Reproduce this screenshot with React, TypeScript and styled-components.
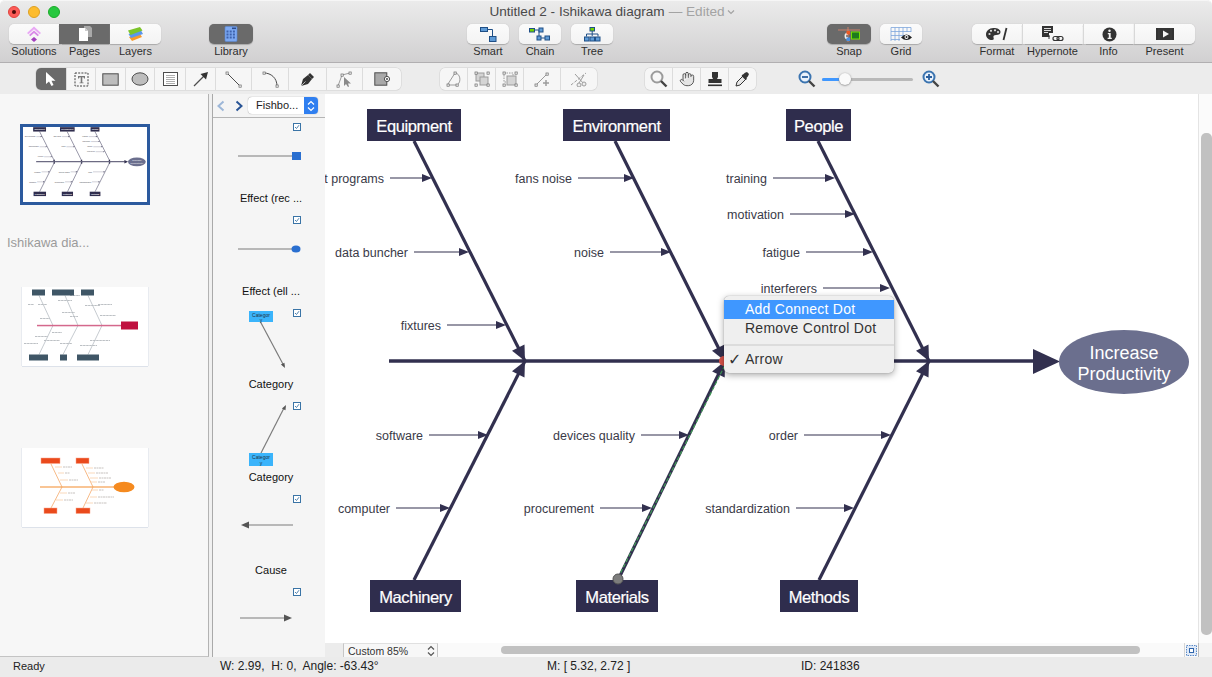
import React from "react";
import styled, { createGlobalStyle } from "styled-components";
import { Hand } from "lucide-react";

const Global = createGlobalStyle`
  html, body { margin: 0; padding: 0; background: #fff; overflow: hidden; }
  * { box-sizing: border-box; }
  #root { width: 1212px; height: 677px; }
`;

const Window = styled.div`
  width: 1212px; height: 677px; display: flex; flex-direction: column; overflow: hidden;
  font-family: "Liberation Sans", Arial, sans-serif; background: #ececec; border-radius: 5px 5px 0 0;
`;
const TopBar = styled.header`
  height: 63px; flex: none; background: linear-gradient(#ebebeb, #d1d0d1);
  border-bottom: 1px solid #b1afb1; border-top: 1px solid #f6f6f6; border-radius: 5px 5px 0 0;
`;
const TitleRow = styled.div`
  height: 21px; display: grid; grid-template-columns: 1fr auto 1fr; align-items: center;
`;
const Lights = styled.div`display: flex; gap: 8px; padding-left: 8px; align-items: center;`;
const Light = styled.span<{ $c: string; $b: string }>`
  width: 12px; height: 12px; border-radius: 50%; background: ${p => p.$c}; border: 1px solid ${p => p.$b};
  display: flex; align-items: center; justify-content: center;
`;
const Dot = styled.span`width: 4px; height: 4px; border-radius: 50%; background: #4d0a08;`;
const Title = styled.div`font-size: 13.6px; color: #4a4a4a; margin-left: 14px; white-space: nowrap; display: flex; align-items: center;`;
const Edited = styled.span`color: #a3a3a3; margin-left: 4px;`;
const ToolRow = styled.div`display: flex; padding: 2px 0 0 9px; align-items: flex-start;`;
const Group = styled.div<{ $ml?: number }>`display: flex; margin-left: ${p => p.$ml ?? 0}px;`;
const Item = styled.div<{ $w: number }>`width: ${p => p.$w}px; display: flex; flex-direction: column; align-items: center;`;
const Cell = styled.div<{ $on?: boolean; $first?: boolean; $last?: boolean; $sep?: boolean }>`
  width: 100%; height: 20px; display: flex; align-items: center; justify-content: center;
  background: ${p => p.$on ? "#6a6a6a" : "linear-gradient(#fbfbfb,#f3f3f3)"};
  border-radius: ${p => p.$first ? "5px" : "0"} ${p => p.$last ? "5px" : "0"} ${p => p.$last ? "5px" : "0"} ${p => p.$first ? "5px" : "0"};
  box-shadow: 0 0.5px 1px #a9a9a9;
  border-left: ${p => p.$sep ? "1px solid #d8d8d8" : "none"};
`;
const Label = styled.div`font-size: 11px; line-height: 13px; margin-top: 1px; color: #2e2e2e; white-space: nowrap;`;

const ShapeBar = styled.div`
  height: 31px; flex: none; display: flex; align-items: flex-start; padding: 5px 0 0 36px; background: #ececec;
`;
const ShapeGroup = styled.div<{ $ml?: number }>`
  display: flex; height: 22px; margin-left: ${p => p.$ml ?? 0}px; border-radius: 5px; background: #f6f6f6;
  box-shadow: 0 0 0 0.5px #cfcfcf; overflow: hidden;
`;
const ShapeCell = styled.div<{ $w: number; $on?: boolean }>`
  width: ${p => p.$w}px; display: flex; align-items: center; justify-content: center;
  background: ${p => p.$on ? "#6a6a6a" : "transparent"}; border-right: 1px solid #dcdcdc;
  &:last-child { border-right: none; }
`;
const ZoomBox = styled.div`display: flex; align-items: center; height: 22px; margin-left: 42px;`;
const Slider = styled.div`width: 91px; height: 3px; margin: 0 9px 0 6px; background: #b9b9b9; border-radius: 2px; position: relative;`;
const SliderFill = styled.div`width: 20px; height: 3px; background: #3f97ff; border-radius: 2px;`;
const Knob = styled.div`
  position: absolute; left: 17px; top: -5px; width: 12px; height: 12px; border-radius: 50%;
  background: #fafafa; box-shadow: 0 0.5px 2px #777;
`;

const Main = styled.div`flex: 1; display: flex; min-height: 0;`;
const PagesPanel = styled.aside`
  width: 209px; flex: none; background: #f7f7f7; border-right: 1px solid #b3b3b3; border-bottom: 1px solid #c4c4c4;
  display: flex; flex-direction: column; align-items: flex-start; padding-top: 30px;
`;
const ThumbActive = styled.div`
  width: 130px; height: 81px; margin-left: 20px; border: 3px solid #2c5a9e; background: #fff; display: flex; overflow: hidden;
`;
const PageName = styled.div`font-size: 13px; line-height: 14px; color: #9b9b9b; margin: 31px 0 0 7px;`;
const Thumb = styled.div<{ $mt: number }>`
  width: 126px; height: 79px; margin: ${p => p.$mt}px 0 0 22px; background: #fff;
  box-shadow: 0 1px 0 #dde2ea, 1px 0 0 #e8ebf0, -1px 0 0 #e8ebf0; display: flex;
`;
const Gutter = styled.div`width: 3px; flex: none; background: #f0f0f0;`;
const LibPanel = styled.aside`
  width: 113px; flex: none; background: #f5f5f5; border-left: 1px solid #a9a9a9; display: flex; flex-direction: column; overflow: hidden;
`;
const LibHead = styled.div`
  height: 24px; flex: none; display: flex; align-items: center; padding-left: 3px; background: #f4f4f4; border-bottom: 1px solid #b5b5b5;
  gap: 8px;
`;
const Select = styled.div`
  width: 70px; height: 17px; margin-left: -4px; display: flex; border-radius: 4px; background: #fff; box-shadow: 0 0 1px #777; overflow: hidden;
`;
const SelectText = styled.span`flex: 1; font-size: 11px; line-height: 17px; padding-left: 8px; color: #222;`;
const SelectArrows = styled.span`width: 14px; background: #2f7ff0; display: flex; align-items: center; justify-content: center;`;
const LibItem = styled.div`height: 93px; flex: none; position: relative;`;
const Check = styled.span`
  position: absolute; top: 5px; right: 24px; width: 8px; height: 8px; background: #fff; border: 1px solid #3a74a6;
  display: flex; align-items: center; justify-content: center;
`;
const Preview = styled.svg`display: block; width: 112px; height: 72px;`;
const LibLabel = styled.div`font-size: 11px; line-height: 16px; text-align: center; color: #111; padding-left: 4px;`;

const Center = styled.div`flex: 1; display: flex; flex-direction: column; min-width: 0;`;
const CanvasRow = styled.div`flex: 1; display: flex; min-height: 0;`;
const Canvas = styled.div`flex: 1; position: relative; background: #fff; overflow: hidden;`;
const VTrack = styled.div`
  width: 14px; flex: none; background: #fbfbfb; border-left: 1px solid #e4e4e4; padding: 39px 0 8px 2px; display: flex;
`;
const VThumb = styled.div`width: 9px; flex: 1; border-radius: 5px; background: #c1c1c1;`;
const BottomRow = styled.div`height: 14px; flex: none; display: flex; align-items: center; background: #fafafa;`;
const Spacer = styled.div`width: 18px; height: 14px; background: #ececec;`;
const ZoomSelect = styled.div`
  width: 95px; height: 14px; display: flex; align-items: center; justify-content: space-between; padding: 0 2px 0 4px;
  background: #f7f7f7; border-left: 1px solid #c6c6c6; border-right: 1px solid #c6c6c6; border-top: 1px solid #e0e0e0;
  font-size: 10.5px; color: #333;
`;
const HTrack = styled.div`flex: 1; padding: 0 44px 0 63px;`;
const HThumb = styled.div`height: 8px; border-radius: 4px; background: #c1c1c1;`;
const FitBox = styled.div`width: 14px; height: 14px; display: flex; align-items: center; justify-content: center; border-left: 1px solid #d5d5d5;`;
const CornerBox = styled.div`width: 14px; height: 14px; background: #f4f4f4; border-left: 1px solid #bbb;`;

const Status = styled.footer`
  height: 20px; flex: none; display: flex; align-items: center; background: #ebebeb; color: #222; padding-bottom: 3px;
`;
const StatusCell = styled.span<{ $w: number; $fs?: number }>`width: ${p => p.$w}px; font-size: ${p => p.$fs ?? 12}px; flex: none; white-space: pre;`;

const Menu = styled.div`
  position: absolute; left: 399px; top: 202px; width: 170px; height: 77px; padding-top: 4px; border-radius: 5px;
  background: #efefef; box-shadow: 0 2px 7px rgba(0,0,0,.35), 0 0 1px rgba(0,0,0,.4);
`;
const MenuItem = styled.div<{ $on?: boolean }>`
  height: 19px; line-height: 19px; padding-left: 21px; font-size: 14px; letter-spacing: .25px; position: relative;
  background: ${p => p.$on ? "#3f97ff" : "transparent"}; color: ${p => p.$on ? "#fff" : "#333"};
`;
const MenuSep = styled.div`height: 2px; background: #dcdcdc; margin: 6px 0 4px;`;
const MenuCheck = styled.span`position: absolute; left: 4px; top: 0; font-size: 16px; font-weight: 700; font-family: "DejaVu Sans", sans-serif;`;

/* ---------- diagram ---------- */
const INK = "#32304f";
type P = [number, number];
const head = (to: P, from: P, len: number, hw: number) => {
  const dx = to[0] - from[0], dy = to[1] - from[1], l = Math.hypot(dx, dy);
  const ux = dx / l, uy = dy / l;
  const bx = to[0] - ux * len, by = to[1] - uy * len;
  return `${to[0]},${to[1]} ${bx - uy * hw},${by + ux * hw} ${bx + uy * hw},${by - ux * hw}`;
};
const boxes = [
  { t: "Equipment", x: 367, w: 94, y: 109 }, { t: "Environment", x: 563, w: 107, y: 109 }, { t: "People", x: 786, w: 65, y: 109 },
  { t: "Machinery", x: 370, w: 91, y: 580 }, { t: "Materials", x: 576, w: 82, y: 580 }, { t: "Methods", x: 780, w: 78, y: 580 },
];
const ribs: [P, P][] = [
  [[414, 141], [525, 361]], [[615, 141], [725, 361]], [[818, 141], [929, 361]],
  [[414, 580], [525, 361]], [[618, 580], [725, 361]], [[819, 580], [929, 361]],
];
const causes: [string, number, number, number][] = [
  ["Test programs", 384, 432, 178], ["data buncher", 408, 469, 252], ["fixtures", 441, 506, 325],
  ["fans noise", 572, 634, 178], ["noise", 604, 671, 252],
  ["training", 767, 835, 178], ["motivation", 784, 855, 214], ["fatigue", 800, 873, 252], ["interferers", 817, 890, 288],
  ["software", 423, 488, 435], ["computer", 390, 450, 508],
  ["devices quality", 635, 689, 435], ["procurement", 594, 652, 508],
  ["order", 798, 891, 435], ["standardization", 790, 854, 508],
];
const DiagramSvg = styled.svg<{ $w: number; $h: number }>`display: block; width: ${p => p.$w}px; height: ${p => p.$h}px; font-family: "Liberation Sans", Arial, sans-serif;`;
const NodeText = styled.text`font-size: 16.5px; letter-spacing: -0.4px; fill: #fff; stroke: #fff; stroke-width: 0.2px;`;

const Diagram = ({ box, w, h, selected }: { box: string; w: number; h: number; selected?: boolean }) => (
  <DiagramSvg $w={w} $h={h} viewBox={box}>
    <line x1={389} y1={361} x2={1036} y2={361} stroke={selected ? INK : "#6d6b83"} strokeWidth={selected ? 3.5 : 9} />
    <polygon points="1033,349 1060,361.5 1033,374" fill={INK} />
    {ribs.map(([a, b], i) => (
      <g key={i}>
        <line x1={a[0]} y1={a[1]} x2={b[0]} y2={b[1]} stroke={selected ? INK : "#77758c"} strokeWidth={selected ? 3.2 : 5.5} />
        <polygon points={head(b, a, 15, 7)} fill={INK} />
      </g>
    ))}
    {causes.map(([t, end, to, y]) => (
      <g key={t}>
        <text x={end} y={y + 5} textAnchor="end" fontSize={12.5} fill="#3a3a48">{t}</text>
        <line x1={end + 6} y1={y} x2={to - 6} y2={y} stroke={selected ? INK : "#8d8ca0"} strokeWidth={selected ? 1.2 : 3} />
        <polygon points={`${to},${y} ${to - 10},${y - 4} ${to - 10},${y + 4}`} fill={INK} />
      </g>
    ))}
    {boxes.map(b => (
      <g key={b.t}>
        <rect x={b.x} y={b.y} width={b.w} height={32} fill="#2f2d4d" />
        <NodeText x={b.x + b.w / 2} y={b.y + 23} textAnchor="middle">{b.t}</NodeText>
      </g>
    ))}
    <ellipse cx={1124} cy={362} rx={65} ry={32} fill="#6b6f8e" />
    <text x={1124} y={359} textAnchor="middle" fontSize={18} fill="#fff">Increase</text>
    <text x={1124} y={380} textAnchor="middle" fontSize={18} fill="#fff">Productivity</text>
    {selected && (
      <g>
        <circle cx={724} cy={361} r={5} fill="#d9534a" />
        <line x1={618} y1={578} x2={725} y2={365} stroke="#3f9a55" strokeWidth={1.2} strokeDasharray="4 2" />
        <circle cx={618} cy={579} r={5} fill="#7d7d7d" stroke="#555" />
      </g>
    )}
  </DiagramSvg>
);

const FullSvg = styled.svg`display: block; width: 100%; height: 100%;`;

const ThumbTwo = () => {
  const gray = "#aeb5bb";
  const branches: [number, number, number][] = [
    [28, 34, 304], [38, 47, 304], [40, 50, 318], [52, 62, 332], [44, 60, 340], [58, 72, 300], [62, 75, 312], [70, 78, 316], [85, 100, 305],
    [98, 112, 304], [100, 116, 315], [35, 48, 336], [60, 72, 343], [90, 110, 340], [80, 97, 345], [24, 38, 343], [70, 80, 295],
  ];
  const blocks: [number, number, number, number][] = [[32, 289, 13, 6], [52, 289, 22, 6], [81, 289, 13, 6], [29, 354, 19, 6], [60, 354, 7, 6], [77, 354, 22, 6]];
  return (
    <FullSvg viewBox="22 287 126 78">
      {[[39, 295, 53, 325], [65, 295, 78, 325], [88, 295, 102, 325], [39, 354, 53, 325], [63, 354, 78, 325], [88, 354, 102, 325]].map((l, i) => (
        <line key={i} x1={l[0]} y1={l[1]} x2={l[2]} y2={l[3]} stroke={gray} strokeWidth={0.7} />
      ))}
      {branches.map(([a, b, y], i) => <line key={i} x1={a} x2={b} y1={y} y2={y} stroke="#b4b9bd" strokeWidth={0.9} strokeDasharray="2.5 0.6" />)}
      <rect x={37} y={324.3} width={84} height={1.5} fill="#d4688c" />
      {blocks.map(([x, y, w, h], i) => <rect key={i} x={x} y={y} width={w} height={h} fill="#3f5666" />)}
      <rect x={121} y={321} width={17} height={8} fill="#c0103f" />
    </FullSvg>
  );
};
const ThumbThree = () => {
  const or = "#f5a868";
  const branches: [number, number, number][] = [
    [55, 62, 467], [58, 64, 473], [60, 68, 480], [86, 93, 468], [88, 95, 473], [90, 98, 478], [91, 97, 482],
    [60, 67, 493], [56, 63, 500], [92, 98, 490], [90, 97, 497], [86, 93, 503],
  ];
  const labels: [number, number, number][] = [
    [63, 72, 467], [65, 70, 473], [69, 78, 480], [94, 104, 468], [96, 108, 473], [99, 111, 478], [98, 105, 482],
    [68, 75, 493], [64, 73, 500], [99, 104, 490], [98, 114, 497], [94, 107, 503],
  ];
  return (
    <FullSvg viewBox="22 448 126 79">
      {[[51, 464, 62, 487], [82, 464, 93, 487], [51, 508, 62, 487], [83, 508, 93, 487]].map((l, i) => (
        <line key={i} x1={l[0]} y1={l[1]} x2={l[2]} y2={l[3]} stroke={or} strokeWidth={0.8} />
      ))}
      {branches.map(([a, b, y], i) => <line key={i} x1={a} x2={b} y1={y} y2={y} stroke="#f9cfa9" strokeWidth={0.8} />)}
      {labels.map(([a, b, y], i) => <line key={i} x1={a} x2={b} y1={y} y2={y} stroke="#b9b3ae" strokeWidth={0.8} strokeDasharray="2 0.5" />)}
      <rect x={40} y={486.4} width={74} height={1.2} fill="#f5a050" />
      {[[41, 458, 19], [76, 458, 13], [44, 508, 13], [76, 508, 14]].map(([x, y, w], i) => (
        <rect key={i} x={x} y={y} width={w} height={5.5} fill="#ea4a1c" stroke="#f9a58a" strokeWidth={0.5} />
      ))}
      <ellipse cx={124} cy={487} rx={10.5} ry={5.2} fill="#f58a1f" />
    </FullSvg>
  );
};

/* ---------- icons ---------- */
const Ico = ({ w = 20, h = 20, vb, children }: { w?: number; h?: number; vb?: string; children: React.ReactNode }) => (
  <svg width={w} height={h} viewBox={vb ?? `0 0 ${w} ${h}`}>{children}</svg>
);
const Solutions = () => (
  <Ico w={16} h={16}>
    <path d="M8 0.5 15 7 13.6 8.3 8 3.2 2.4 8.3 1 7Z" fill="#e9a8f5" />
    <path d="M8 4.5 13 9 11.6 10.3 8 7 4.4 10.3 3 9Z" fill="#d98ae8" />
    <path d="M8 11 11 13.5 8 16 5 13.5Z" fill="#a23fbd" />
  </Ico>
);
const Pages = () => (
  <Ico w={16} h={16}>
    <path d="M7 0H13L15 2V11H7Z" fill="#a9a9a9" />
    <path d="M2 2H8L11 5V15H2Z" fill="#fff" />
    <path d="M8 2V5H11Z" fill="#ccc" />
  </Ico>
);
const Layers = () => (
  <Ico w={17} h={16}>
    <path d="M2 11 13 8 15 11 5 15Z" fill="#f79a2b" />
    <path d="M1.5 8 14 4.5 16 8 4 12Z" fill="#5a96ee" />
    <path d="M1 4.5 13 1 15.5 4.5 3.5 9Z" fill="#7cc42a" />
  </Ico>
);
const Library = () => (
  <Ico w={14} h={16}>
    <rect x={1} y={0.5} width={12} height={15} rx={1} fill="#7da9f2" stroke="#5c86d0" strokeWidth={0.6} />
    <rect x={8} y={1.5} width={4} height={1.6} fill="#2b4d8f" />
    {[4.5, 7.5, 10.5].map(y => [2.5, 5.7, 8.9].map(x => <rect key={`${x}${y}`} x={x} y={y} width={2} height={2} fill="#3e63ad" />))}
  </Ico>
);
const NB = "#1f4f86", NF = "#5f9bd6";
const Smart = () => (
  <Ico w={17} h={15}>
    <rect x={0.5} y={0.5} width={7} height={4} fill={NF} stroke={NB} />
    <path d="M8 2.5H12.5V9" stroke={NB} fill="none" strokeWidth={1} />
    <rect x={9.5} y={9.5} width={6.5} height={5} fill={NF} stroke={NB} />
  </Ico>
);
const Chain = () => (
  <Ico w={22} h={15}>
    <rect x={0.5} y={1.5} width={5} height={3.5} fill="#72d400" stroke={NB} />
    <path d="M6 3H13M10 3V11M12 11H16" stroke={NB} strokeWidth={1} fill="none" />
    <rect x={10} y={1} width={4} height={4} fill={NF} stroke={NB} />
    <rect x={8} y={9} width={4} height={4} fill={NF} stroke={NB} />
    <rect x={16} y={9} width={4.5} height={4} fill={NF} stroke={NB} />
  </Ico>
);
const Tree = () => (
  <Ico w={17} h={15}>
    <rect x={6} y={0.5} width={4.5} height={3.5} fill="#72d400" stroke={NB} />
    <path d="M8.2 4V9M2.5 9.5V7H14V9.5" stroke={NB} fill="none" />
    {[0.5, 6, 11.5].map(x => <rect key={x} x={x} y={10} width={4.5} height={4} fill={NF} stroke={NB} />)}
  </Ico>
);
const Snap = () => (
  <Ico w={23} h={15}>
    <path d="M0 3H22M10 0V15" stroke="#e5856a" strokeWidth={0.8} />
    <path d="M10 5.5A3.5 3.5 0 1 0 10 12.5V10H9A1 1 0 0 1 9 8H10Z" fill="#eee" />
    <rect x={8.5} y={4} width={3.5} height={3.5} fill="#ee5a24" />
    <rect x={8.5} y={10.5} width={3.5} height={3.5} fill="#4a90e2" />
    <rect x={13.5} y={5} width={8} height={7} fill="#1d7a1d" stroke="#76e000" />
  </Ico>
);
const Grid = () => (
  <Ico w={23} h={15}>
    <path d="M1 .5H21M1 4.5H21M1 8.5H14M1 12.5H10M1 .5V14M5 .5V14M9 .5V14M13 .5V9M17 .5V5M21 .5V5" stroke="#7ea6dc" strokeWidth={0.8} fill="none" />
    <path d="M11 10.5Q16.5 4.5 22 10.5Q16.5 15.5 11 10.5Z" fill="#222" />
    <circle cx={16.5} cy={10} r={2} fill="#fff" />
    <circle cx={16.5} cy={10} r={1} fill="#222" />
  </Ico>
);
const Format = () => (
  <Ico w={22} h={14}>
    <path d="M7.5 1C3 1 0 4 0 7.5 0 11 3 13 6 13 8 13 8 11.5 7.5 10.5 7 9 8 8 10 8 13 8 14.5 7 14.5 5 14.5 2.5 11.5 1 7.5 1Z" fill="#333" />
    <circle cx={3.5} cy={7} r={1.1} fill="#ddd" /><circle cx={5} cy={3.8} r={1.1} fill="#ddd" /><circle cx={9} cy={3.3} r={1.1} fill="#ddd" /><circle cx={12} cy={5} r={1.1} fill="#ddd" />
    <path d="M20.5 1 17.5 13" stroke="#333" strokeWidth={1.8} />
  </Ico>
);
const Hypernote = () => (
  <Ico w={23} h={16}>
    <path d="M0 0H11V7H7V11H0Z" fill="#333" />
    <path d="M2 2.5H9M2 4.5H9M2 6.5H6" stroke="#eee" strokeWidth={0.9} />
    <path d="M8 10H7V13" stroke="#333" fill="none" />
    <rect x={11} y={10.5} width={6} height={4} rx={2} stroke="#333" fill="none" strokeWidth={1.2} />
    <rect x={15} y={10.5} width={6} height={4} rx={2} stroke="#333" fill="none" strokeWidth={1.2} />
  </Ico>
);
const Info = () => (
  <Ico w={15} h={15}>
    <circle cx={7.5} cy={7.5} r={7} fill="#333" />
    <circle cx={7.5} cy={3.8} r={1.2} fill="#f4f4f4" />
    <path d="M5.8 6H8.7V10.8H9.8V12H5.6V10.8H6.8V7.2H5.8Z" fill="#f4f4f4" />
  </Ico>
);
const Present = () => (
  <Ico w={18} h={12}>
    <rect width={18} height={12} fill="#333" />
    <path d="M7 2.5 13 6 7 9.5Z" fill="#f4f4f4" />
    <path d="M3 0V12M15 0V12" stroke="#4d4d4d" strokeWidth={0.5} />
  </Ico>
);
const G = "#4d4d4d", S = "#9c9c9c";
const H = ({ x, y }: { x: number; y: number }) => <rect x={x - 1} y={y - 1} width={2.2} height={2.2} fill="#fff" stroke="#666" strokeWidth={0.7} />;
const Pointer = () => <Ico w={14} h={16}><path d="M2 1V13L5 10.5 7.5 15 9.5 14 7.5 9.7H11.5Z" fill="#fff" /></Ico>;
const TextBox = () => (
  <Ico w={15} h={15}>
    <rect x={1} y={1} width={13} height={13} fill="none" stroke="#444" strokeDasharray="2 1.2" />
    <path d="M4 4H11V6.5H10L9.5 5.2H8.3V10.5H9.5V11.3H5.5V10.5H6.7V5.2H5.5L5 6.5H4Z" fill="#777" />
  </Ico>
);
const RectIco = () => <Ico w={17} h={13}><rect x={0.8} y={0.8} width={15.4} height={11.4} fill="#bdbdbd" stroke={G} /></Ico>;
const Ell = () => <Ico w={18} h={14}><ellipse cx={9} cy={7} rx={8} ry={6.2} fill="#bdbdbd" stroke={G} /></Ico>;
const TextList = () => (
  <Ico w={15} h={14}>
    <rect x={0.5} y={0.5} width={14} height={13} fill="#fff" stroke={G} />
    <path d="M3 3.5H12M3 5.5H12M3 7.5H12M3 9.5H12M3 11.5H12" stroke="#777" strokeWidth={0.6} />
  </Ico>
);
const ArrowIco = () => <Ico w={16} h={16}><path d="M1 15 12 4" stroke={G} strokeWidth={1.3} /><path d="M15 1 13 8.5 7.5 3Z" fill="#333" /></Ico>;
const LineIco = () => <Ico w={17} h={17}><path d="M2 2 15 15" stroke={G} strokeWidth={1} /><H x={2} y={2} /><H x={15} y={15} /></Ico>;
const CurveIco = () => <Ico w={17} h={17}><path d="M2 2C9 2 15 7 15 15" stroke={G} fill="none" /><H x={2} y={2} /><H x={15} y={15} /></Ico>;
const PenIco = () => (
  <Ico w={16} h={16}>
    <path d="M1 15 3 8 8 4 12 8 8 13Z" fill="#333" />
    <path d="M8 4 10 2 14 6 12 8Z" fill="#333" />
    <path d="M1 15 5.5 10.5" stroke="#eee" strokeWidth={0.7} />
  </Ico>
);
const DirectIco = () => (
  <Ico w={17} h={17}>
    <path d="M2 15 6 4 14 2" stroke={S} fill="none" /><H x={2} y={15} /><H x={6} y={4} /><H x={14} y={2} />
    <path d="M8 6V15L10 13 12 16 13 15.5 12 12.5H15Z" fill="#8a8a8a" />
  </Ico>
);
const ConnIco = () => (
  <Ico w={17} h={14}>
    <rect x={0.8} y={0.8} width={12} height={12.4} fill="#a9a9a9" stroke={G} />
    <circle cx={13} cy={7} r={2.6} fill="#fff" stroke={G} /><circle cx={13} cy={7} r={0.9} fill="#333" />
  </Ico>
);
const Arc = () => <Ico w={16} h={16}><path d="M2 13 9 2C14 2 16 11 11 14H3" stroke={S} fill="none" /><H x={2} y={14} /><H x={9} y={2} /><H x={11} y={14} /></Ico>;
const Union = () => (
  <Ico w={16} h={16}>
    <rect x={2} y={2} width={8} height={8} fill="#d4d4d4" stroke={S} /><rect x={6} y={6} width={8} height={8} fill="#d4d4d4" stroke={S} />
    <H x={2} y={2} /><H x={14} y={2} /><H x={2} y={14} /><H x={14} y={14} />
  </Ico>
);
const Sect = () => (
  <Ico w={16} h={16}>
    <rect x={2} y={2} width={9} height={9} fill="none" stroke={S} strokeDasharray="1.5 1" /><rect x={5} y={5} width={9} height={9} fill="#d4d4d4" stroke={S} />
    <H x={2} y={2} /><H x={14} y={2} /><H x={2} y={14} /><H x={14} y={14} />
  </Ico>
);
const AddPt = () => <Ico w={17} h={15}><path d="M2 13 13 2" stroke={S} /><H x={2} y={13} /><H x={13} y={2} /><path d="M9 11H15M12 8V14" stroke={S} strokeWidth={1.5} /></Ico>;
const Sciss = () => (
  <Ico w={18} h={16}>
    <path d="M1 14 16 2" stroke={S} strokeDasharray="3 1.5" /><path d="M5 3 14 13" stroke={S} />
    <circle cx={14} cy={13} r={2} fill="#eee" stroke={S} /><circle cx={9} cy={14} r={2} fill="#eee" stroke={S} /><path d="M9 12 14 4" stroke={S} />
  </Ico>
);
const Loupe = ({ c = "#9b9b9b", mark }: { c?: string; mark?: "minus" | "plus" }) => (
  <Ico w={18} h={18}>
    <circle cx={7} cy={7} r={5.5} fill={mark ? "#eaf2fb" : "#f7f7f7"} stroke={c} strokeWidth={2} />
    <path d="M11 11 16.5 16.5" stroke="#444" strokeWidth={2.4} />
    {mark && <path d={mark === "plus" ? "M4 7H10M7 4V10" : "M4 7H10"} stroke="#2a5f9e" strokeWidth={1.8} />}
  </Ico>
);
const Stamp = () => (
  <Ico w={16} h={16}>
    <path d="M5 1H11V6L10 8H14.5V12H1.5V8H6L5 6Z" fill="#333" /><rect x={1} y={13.5} width={14} height={1.6} fill="#333" />
  </Ico>
);
const Dropper = () => (
  <Ico w={15} h={16}>
    <path d="M1 15 2 11 8 5 11 8 5 14Z" fill="#e8e8e8" stroke="#333" />
    <path d="M8 3.5 10 1.8 12 1 14 3 13 5.2 11.5 7 12 8 10.5 9 6.5 5 7.5 3.5Z" fill="#333" />
  </Ico>
);
const Updown = ({ c = "#555" }: { c?: string }) => (
  <Ico w={8} h={12}><path d="M1 4.5 4 1.5 7 4.5M1 7.5 4 10.5 7 7.5" fill="none" stroke={c} strokeWidth={1.2} /></Ico>
);
const Chev = ({ c, flip }: { c: string; flip?: boolean }) => (
  <Ico w={10} h={12}><path d={flip ? "M7.5 1.5 2.5 6 7.5 10.5" : "M2.5 1.5 7.5 6 2.5 10.5"} fill="none" stroke={c} strokeWidth={2} /></Ico>
);
const CheckMark = () => <Ico w={6} h={6}><path d="M1 3 2.5 4.5 5 1.2" stroke="#3a74a6" fill="none" strokeWidth={0.9} /></Ico>;

/* ---------- library previews ---------- */
const PV = "#7c7c7c";
const previews: { label: string; art: React.ReactNode }[] = [
  { label: "Effect (rec ...", art: <><line x1={25} y1={38} x2={80} y2={38} stroke={PV} strokeWidth={1.2} /><rect x={79} y={34} width={9} height={8} fill="#2a6fd0" /></> },
  { label: "Effect (ell ...", art: <><line x1={25} y1={38} x2={80} y2={38} stroke={PV} strokeWidth={1.2} /><ellipse cx={83} cy={38} rx={4.5} ry={3.5} fill="#2a6fd0" /></> },
  { label: "Category", art: <><line x1={47} y1={17} x2={71} y2={62} stroke={PV} strokeWidth={1.2} /><polygon points={head([72, 64], [47, 17], 5, 2)} fill="#555" /><rect x={36} y={7} width={24} height={11} fill="#3ab4fb" /><text x={48} y={12.5} textAnchor="middle" fontSize={5} fill="#234">Categor</text><text x={48} y={17.5} textAnchor="middle" fontSize={5} fill="#234">y</text></> },
  { label: "Category", art: <><line x1={48} y1={56} x2={71} y2={11} stroke={PV} strokeWidth={1.2} /><polygon points={head([73, 8], [48, 56], 5, 2)} fill="#555" /><rect x={36} y={56} width={24} height={13} fill="#3ab4fb" /><text x={48} y={62} textAnchor="middle" fontSize={5} fill="#234">Categor</text><text x={48} y={67.5} textAnchor="middle" fontSize={5} fill="#234">y</text></> },
  { label: "Cause", art: <><line x1={34} y1={35} x2={80} y2={35} stroke={PV} strokeWidth={1.2} /><polygon points="28,35 36,31.5 36,38.5" fill="#555" /></> },
  { label: "", art: <><line x1={27} y1={35} x2={73} y2={35} stroke={PV} strokeWidth={1.2} /><polygon points="79,35 71,31.5 71,38.5" fill="#555" /></> },
];

export default function App() {
  return (
    <Window>
      <Global />
      <TopBar>
        <TitleRow>
          <Lights>
            <Light $c="#fc5b57" $b="#e0443e"><Dot /></Light>
            <Light $c="#fdbc2e" $b="#dea123" />
            <Light $c="#27c83f" $b="#1aab29" />
          </Lights>
          <Title>
            Untitled 2 - Ishikawa diagram <Edited>— Edited</Edited>
            <Ico w={12} h={10}><path d="M3 3.5 6 6.5 9 3.5" stroke="#a3a3a3" fill="none" strokeWidth={1.2} /></Ico>
          </Title>
          <span />
        </TitleRow>
        <ToolRow>
          <Group>
            <Item $w={50}><Cell $first><Solutions /></Cell><Label>Solutions</Label></Item>
            <Item $w={51}><Cell $on><Pages /></Cell><Label>Pages</Label></Item>
            <Item $w={51}><Cell $last><Layers /></Cell><Label>Layers</Label></Item>
          </Group>
          <Group $ml={48}><Item $w={44}><Cell $on $first $last><Library /></Cell><Label>Library</Label></Item></Group>
          <Group $ml={214}><Item $w={42}><Cell $first $last><Smart /></Cell><Label>Smart</Label></Item></Group>
          <Group $ml={10}><Item $w={42}><Cell $first $last><Chain /></Cell><Label>Chain</Label></Item></Group>
          <Group $ml={10}><Item $w={42}><Cell $first $last><Tree /></Cell><Label>Tree</Label></Item></Group>
          <Group $ml={214}><Item $w={44}><Cell $on $first $last><Snap /></Cell><Label>Snap</Label></Item></Group>
          <Group $ml={9}><Item $w={42}><Cell $first $last><Grid /></Cell><Label>Grid</Label></Item></Group>
          <Group $ml={50}>
            <Item $w={50}><Cell $first><Format /></Cell><Label>Format</Label></Item>
            <Item $w={61}><Cell $sep><Hypernote /></Cell><Label>Hypernote</Label></Item>
            <Item $w={51}><Cell $sep><Info /></Cell><Label>Info</Label></Item>
            <Item $w={61}><Cell $sep $last><Present /></Cell><Label>Present</Label></Item>
          </Group>
        </ToolRow>
      </TopBar>
      <ShapeBar>
        <ShapeGroup>
          <ShapeCell $w={31} $on><Pointer /></ShapeCell>
          <ShapeCell $w={29}><TextBox /></ShapeCell>
          <ShapeCell $w={30}><RectIco /></ShapeCell>
          <ShapeCell $w={29}><Ell /></ShapeCell>
          <ShapeCell $w={31}><TextList /></ShapeCell>
          <ShapeCell $w={30}><ArrowIco /></ShapeCell>
          <ShapeCell $w={36}><LineIco /></ShapeCell>
          <ShapeCell $w={37}><CurveIco /></ShapeCell>
          <ShapeCell $w={38}><PenIco /></ShapeCell>
          <ShapeCell $w={36}><DirectIco /></ShapeCell>
          <ShapeCell $w={38}><ConnIco /></ShapeCell>
        </ShapeGroup>
        <ShapeGroup $ml={39}>
          <ShapeCell $w={28}><Arc /></ShapeCell>
          <ShapeCell $w={28}><Union /></ShapeCell>
          <ShapeCell $w={28}><Sect /></ShapeCell>
          <ShapeCell $w={37}><AddPt /></ShapeCell>
          <ShapeCell $w={36}><Sciss /></ShapeCell>
        </ShapeGroup>
        <ShapeGroup $ml={48}>
          <ShapeCell $w={28}><Loupe /></ShapeCell>
          <ShapeCell $w={28}><Hand size={16} color="#444" strokeWidth={1.3} fill="#e4e4e4" /></ShapeCell>
          <ShapeCell $w={28}><Stamp /></ShapeCell>
          <ShapeCell $w={27}><Dropper /></ShapeCell>
        </ShapeGroup>
        <ZoomBox>
          <Loupe c="#3b74b0" mark="minus" />
          <Slider><SliderFill /><Knob /></Slider>
          <Loupe c="#3b74b0" mark="plus" />
        </ZoomBox>
      </ShapeBar>
      <Main>
        <PagesPanel>
          <ThumbActive><Diagram box="293 108 905 547" w={124} h={75} /></ThumbActive>
          <PageName>Ishikawa dia...</PageName>
          <Thumb $mt={37}><ThumbTwo /></Thumb>
          <Thumb $mt={82}><ThumbThree /></Thumb>
        </PagesPanel>
        <Gutter />
        <LibPanel>
          <LibHead>
            <Chev c="#9db7d8" flip />
            <Chev c="#2a5596" />
            <Select>
              <SelectText>Fishbo...</SelectText>
              <SelectArrows><Updown c="#fff" /></SelectArrows>
            </Select>
          </LibHead>
          {previews.map((p, i) => (
            <LibItem key={i}>
              <Check><CheckMark /></Check>
              <Preview viewBox="0 0 112 72">{p.art}</Preview>
              <LibLabel>{p.label}</LibLabel>
            </LibItem>
          ))}
        </LibPanel>
        <Center>
          <CanvasRow>
            <Canvas>
              <Diagram box="325 94 873 549" w={873} h={549} selected />
              <Menu>
                <MenuItem $on>Add Connect Dot</MenuItem>
                <MenuItem>Remove Control Dot</MenuItem>
                <MenuSep />
                <MenuItem><MenuCheck>✓</MenuCheck>Arrow</MenuItem>
              </Menu>
            </Canvas>
            <VTrack><VThumb /></VTrack>
          </CanvasRow>
          <BottomRow>
            <Spacer />
            <ZoomSelect>Custom 85%<Updown /></ZoomSelect>
            <HTrack><HThumb /></HTrack>
            <FitBox><Ico w={11} h={11}><rect x={0.5} y={0.5} width={10} height={10} fill="#dfe9f7" stroke="#5b8ac7" strokeDasharray="1.5 1" /><rect x={3.5} y={3.5} width={4} height={4} fill="#fff" stroke="#2f66ad" /></Ico></FitBox>
            <CornerBox />
          </BottomRow>
        </Center>
      </Main>
      <Status>
        <StatusCell $w={13} />
        <StatusCell $w={207} $fs={11}>Ready</StatusCell>
        <StatusCell $w={327}>W: 2.99,  H: 0,  Angle: -63.43°</StatusCell>
        <StatusCell $w={254}>M: [ 5.32, 2.72 ]</StatusCell>
        <StatusCell $w={120}>ID: 241836</StatusCell>
      </Status>
    </Window>
  );
}
